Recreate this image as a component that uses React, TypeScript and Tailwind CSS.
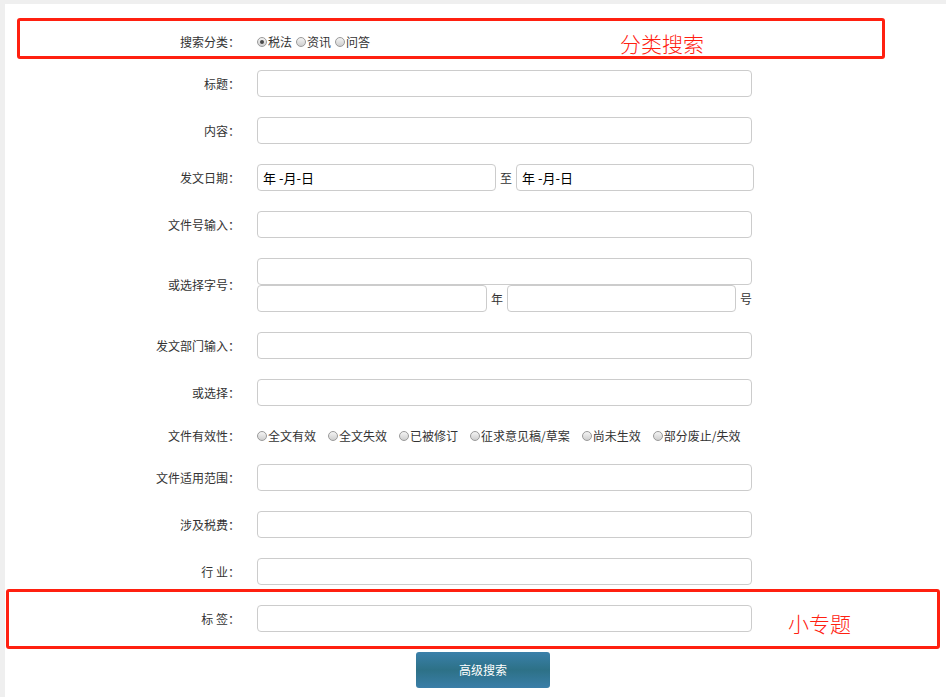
import React from "react";

const font = { fontFamily: '"Noto Sans CJK SC", "Liberation Sans", sans-serif' };

function Radio({ checked = false }: { checked?: boolean }) {
  return (
    <span className="mr-[1px] inline-flex h-[10px] w-[10px] shrink-0 items-center justify-center rounded-full border border-[#9a9a9a] bg-gradient-to-b from-[#f4f4f4] to-[#cfcfcf]">
      {checked ? <span className="h-[4px] w-[4px] rounded-full bg-[#4a4a4a]" /> : null}
    </span>
  );
}

function Field({ className = "w-[495px]", value = "" }: { className?: string; value?: string }) {
  return (
    <div
      className={`flex h-[27px] items-center rounded-[4px] border border-[#cccccc] bg-white px-[5px] text-[13px] text-black ${className}`}
    >
      {value}
    </div>
  );
}

function Row({ label, children, className = "" }: { label: string; children: React.ReactNode; className?: string }) {
  return (
    <div className={`flex items-center py-[10px] ${className}`}>
      <div className="w-[235px] shrink-0 text-right text-[12px] leading-[16px] text-[#333]">{label}</div>
      <div className="pl-[17px]">{children}</div>
    </div>
  );
}

const validity = ["全文有效", "全文失效", "已被修订", "征求意见稿/草案", "尚未生效", "部分废止/失效"];

export default function App() {
  return (
    <div className="relative min-h-[697px] bg-[#efefef] pl-[5px] pt-[4px]" style={font}>
      <div className="min-h-[693px] bg-white pt-[20px]">
        <Row label="搜索分类：">
          <div className="flex items-center text-[12px] leading-[16px] text-[#333]">
            <span className="flex items-center">
              <Radio checked />
              税法
            </span>
            <span className="ml-[4px] flex items-center">
              <Radio />
              资讯
            </span>
            <span className="ml-[4px] flex items-center">
              <Radio />
              问答
            </span>
          </div>
        </Row>
        <Row label="标题：">
          <Field />
        </Row>
        <Row label="内容：">
          <Field />
        </Row>
        <Row label="发文日期：">
          <div className="flex items-center text-[12px] text-[#333]">
            <Field className="w-[239px]" value="年 -月-日" />
            <span className="mx-[4px]">至</span>
            <Field className="w-[238px]" value="年 -月-日" />
          </div>
        </Row>
        <Row label="文件号输入：">
          <Field />
        </Row>
        <Row label="或选择字号：">
          <div className="flex flex-col">
            <Field />
            <div className="flex items-center text-[12px] text-[#333]">
              <Field className="w-[230px]" />
              <span className="mx-[4px]">年</span>
              <Field className="w-[229px]" />
              <span className="ml-[4px]">号</span>
            </div>
          </div>
        </Row>
        <Row label="发文部门输入：">
          <Field />
        </Row>
        <Row label="或选择：">
          <Field />
        </Row>
        <Row label="文件有效性：" className="!pb-[10px] !pt-[12px]">
          <div className="flex items-center gap-[12px] text-[12px] leading-[16px] text-[#333]">
            {validity.map((v) => (
              <span key={v} className="flex items-center">
                <Radio />
                {v}
              </span>
            ))}
          </div>
        </Row>
        <Row label="文件适用范围：">
          <Field />
        </Row>
        <Row label="涉及税费：">
          <Field />
        </Row>
        <Row label="行 业：">
          <Field />
        </Row>
        <Row label="标 签：">
          <Field />
        </Row>
        <div className="mt-[10px] pl-[411px]">
          <button className="h-[36px] w-[134px] rounded-[3px] bg-gradient-to-b from-[#3a80aa] via-[#2d7187] to-[#3a7ea8] text-[12px] text-white">
            高级搜索
          </button>
        </div>
      </div>

      {/* annotation overlays */}
      <div className="absolute left-[17px] top-[18px] h-[41px] w-[868px] rounded-[3px] border-[3px] border-[#ff2010]" />
      <div className="absolute left-[620px] top-[30px] text-[21px] font-light leading-[26px] text-[#ff2010]">分类搜索</div>
      <div className="absolute left-[6px] top-[589px] h-[60px] w-[934px] rounded-[3px] border-[3px] border-[#ff2010]" />
      <div className="absolute left-[788px] top-[610px] text-[21px] font-light leading-[26px] text-[#ff2010]">小专题</div>
    </div>
  );
}
